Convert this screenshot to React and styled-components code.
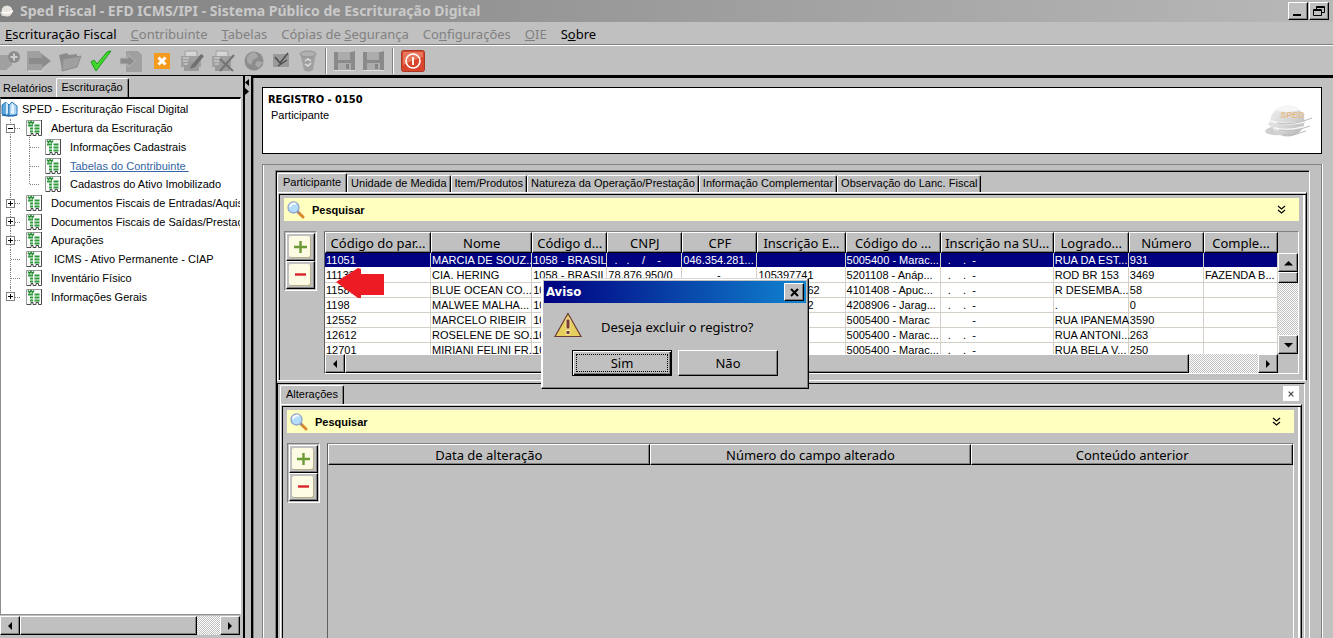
import React from "react";
import styled, { createGlobalStyle, css } from "styled-components";

const Global = createGlobalStyle`
  * { box-sizing: border-box; }
  body { margin: 0; background: #c0c0c0; }
  button { font: inherit; color: inherit; padding: 0; border: 0; background: none; }
  svg { display: block; }
`;

const small = css`
  font-family: "Liberation Sans", Arial, sans-serif;
  font-size: 11px;
`;
const large = css`
  font-family: "Noto Sans", Tahoma, sans-serif;
  font-size: 13px;
`;
const heading = css`
  font-family: "DejaVu Sans Condensed", "DejaVu Sans", Tahoma, sans-serif;
  font-weight: bold;
`;
const raised = css`
  background: #c0c0c0;
  border: 1px solid;
  border-color: #fff #000 #000 #fff;
  box-shadow: inset -1px -1px #808080;
`;
const dither = css`
  background: repeating-conic-gradient(#c0c0c0 0 25%, #fff 0 50%) 0 0 / 2px 2px;
`;

const Page = styled.div`
  ${small}
  height: 100vh;
  min-height: 520px;
  display: flex;
  flex-direction: column;
  overflow: hidden;
  color: #000;
  background: #c0c0c0;
`;

const TitleBar = styled.header`
  ${large}
  height: 22px;
  flex: none;
  display: flex;
  align-items: center;
  gap: 6px;
  padding-right: 4px;
  color: #c9c9c9;
  background: linear-gradient(90deg, #808080, #b8b8b8);
  h1 { flex: 1; margin: 0; font-size: 14px; line-height: 20px; font-weight: bold; white-space: nowrap; }
`;
const WindowButton = styled.button`
  ${raised}
  width: 20px;
  height: 18px;
  display: grid;
  place-items: center;
`;
const WindowButtons = styled.div`
  display: flex;
  gap: 1px;
`;

const MenuBar = styled.nav`
  ${large}
  height: 24px;
  flex: none;
  display: flex;
  align-items: center;
  gap: 14px;
  padding-left: 5px;
  border-bottom: 1px solid #fff;
  box-shadow: inset 0 -1px #808080;
`;
const MenuItem = styled.button`
  line-height: 20px;
  white-space: nowrap;
  color: ${(p) => (p.disabled ? "#808080" : "#000")};
`;

const ToolBar = styled.div`
  height: 29px;
  flex: none;
  display: flex;
  align-items: center;
  gap: 7px;
`;
const ToolButton = styled.button`
  width: ${(p) => p.$w}px;
  height: 24px;
  flex: none;
  display: grid;
  place-items: center;
`;
const ToolSeparator = styled.span`
  width: 2px;
  height: 26px;
  border-left: 1px solid #808080;
  border-right: 1px solid #fff;
`;

const Workspace = styled.div`
  flex: 1;
  min-height: 0;
  display: flex;
  border-top: 1px solid #000;
`;
const Sidebar = styled.aside`
  width: 245px;
  flex: none;
  display: flex;
  flex-direction: column;
  padding-top: 2px;
  border-right: 2px solid #000;
`;
const Splitter = styled.div`
  width: 5px;
  flex: none;
  padding-top: 3px;
`;
const Main = styled.main`
  flex: 1;
  min-width: 0;
  display: flex;
  flex-direction: column;
  gap: 10px;
  padding: 9px 11px 0 9px;
  border-top: 2px solid #000;
  border-left: 2px solid #000;
  box-shadow: inset 1px 0 #808080;
  margin-left: 1px;
`;

const TabList = styled.div`
  display: flex;
  align-items: flex-end;
  height: 19px;
  flex: none;
`;
const Tab = styled.button`
  height: ${(p) => (p.$active ? 19 : 17)}px;
  padding: 0 ${(p) => (p.$active ? 5 : 3)}px 3px;
  line-height: 14px;
  white-space: nowrap;
  border: 1px solid;
  border-color: #fff #000 #c0c0c0 #fff;
  border-bottom: 0;
  border-radius: 2px 2px 0 0;
  box-shadow: ${(p) => (p.$flat ? "none" : "inset -1px 0 #808080")};
  ${(p) => p.$flat && "border-color: transparent; padding: 0 2px 3px;"}
`;

const TreeBox = styled.div`
  flex: 1;
  min-height: 0;
  margin-right: 2px;
  overflow: hidden;
  background: #fff;
  border: 1px solid #909090;
  border-top: 2px solid #000;
  border-right-color: #fff;
`;
const Tree = styled.ul`
  display: grid;
  grid-auto-rows: 1fr;
  height: 206px;
  margin: 1px 0 0;
  padding: 0;
  list-style: none;
`;
const TreeRow = styled.li`
  display: flex;
  align-items: center;
  white-space: pre;
`;
const Guide = styled.span`
  position: relative;
  align-self: stretch;
  width: ${(p) => p.$w}px;
  flex: none;
  &::before {
    content: "";
    position: absolute;
    left: 9px;
    top: 0;
    bottom: ${(p) => (p.$last ? "50%" : 0)};
    border-left: 1px dotted #808080;
  }
  &::after {
    content: "";
    position: absolute;
    display: ${(p) => (p.$branch ? "block" : "none")};
    left: 10px;
    right: 6px;
    top: 50%;
    border-top: 1px dotted #808080;
  }
`;
const Expander = styled.button`
  position: absolute;
  z-index: 1;
  left: 5px;
  top: 5px;
  width: 9px;
  height: 9px;
  background: #fff;
  border: 1px solid #808080;
`;
const TreeLabel = styled.span`
  padding-left: ${(p) => (p.$root ? 4 : 8)}px;
  line-height: 16px;
`;
const TreeLink = styled.a`
  margin-left: 8px;
  line-height: 16px;
  color: #3465a4;
  text-decoration: underline;
`;

const HScroll = styled.div`
  height: 19px;
  flex: none;
  display: flex;
  margin: ${(p) => (p.$outer ? "1px 3px 3px 0" : 0)};
  ${dither}
`;
const Arrow = styled.button`
  ${raised}
  width: 20px;
  height: 19px;
  flex: none;
  display: grid;
  place-items: center;
`;
const Thumb = styled.span`
  ${raised}
  flex: ${(p) => p.$grow} 1 0;
`;
const Track = styled.span`
  flex: ${(p) => p.$grow} 1 0;
`;

const Card = styled.section`
  height: 67px;
  flex: none;
  display: flex;
  align-items: center;
  justify-content: space-between;
  padding: 0 8px 0 5px;
  background: #fff;
  border: 1px solid #000;
`;
const CardText = styled.div`
  align-self: flex-start;
  padding-top: 4px;
  h2 {
    ${heading}
    margin: 0;
    font-size: 11px;
    line-height: 15px;
  }
  p { margin: 0; padding-left: 3px; line-height: 16px; }
`;

const Outer = styled.div`
  flex: 1;
  min-height: 0;
  display: flex;
  padding: 5px 11px 0 12px;
  border: 1px solid #808080;
  border-bottom: 0;
  box-shadow: inset 1px 0 #fff, 1px 0 #fff;
`;
const Frame = styled.div`
  flex: 1;
  min-width: 0;
  display: flex;
  flex-direction: column;
  padding: 2px 2px 0 1px;
  border: 1px solid #808080;
  border-right-color: #fff;
  border-bottom: 0;
  box-shadow: inset 1px 1px #000;
`;
const Pane = styled.section`
  display: flex;
  flex-direction: column;
  gap: 10px;
  padding: 5px 7px 6px 6px;
  border: 1px solid #fff;
  border-right-color: #000;
  box-shadow: inset 1px 1px #c0c0c0, inset 2px 2px #000, inset -1px 0 #808080, inset -3px 0 #fff;
  ${(p) => p.$fill && "flex: 1; min-height: 0; border-bottom: 0; padding-bottom: 0;"}
`;
const Lower = styled.div`
  flex: 1;
  min-height: 0;
  display: flex;
  flex-direction: column;
  margin-top: 2px;
  margin-right: 2px;
  padding: 1px 2px 0 2px;
  border-top: 1px solid #000;
  border-left: 1px solid #000;
  border-right: 1px solid #fff;
`;
const LowerHead = styled.div`
  display: flex;
  justify-content: space-between;
  padding-right: 3px;
`;
const CloseTab = styled.button`
  width: 16px;
  height: 15px;
  flex: none;
  margin-top: 1px;
  display: grid;
  place-items: center;
  background: #fff;
`;

const SearchBar = styled.div`
  height: 23px;
  flex: none;
  display: flex;
  align-items: center;
  gap: 7px;
  padding: 0 13px 0 3px;
  background: #ffffc0;
  font-weight: bold;
  strong { flex: 1; line-height: 20px; }
`;
const PaneBody = styled.div`
  position: relative;
  flex: 1;
  min-height: 0;
  display: flex;
  align-items: flex-start;
  gap: 7px;
`;
const Actions = styled.div`
  width: 33px;
  flex: none;
  padding: 1px;
  border: 1px solid;
  border-color: #808080 #fff #fff #808080;
`;
const ActionButton = styled.button`
  width: 29px;
  height: 28px;
  display: grid;
  place-items: center;
  border: 1px solid;
  border-color: #fff #000 #000 #fff;
  box-shadow: inset -1px -1px #808080;
`;

const GridBox = styled.div`
  flex: 1;
  min-width: 0;
  display: flex;
  border: 1px solid;
  border-color: #808080 #fff #fff #606060;
  ${(p) => (p.$fill ? "align-self: stretch; border-bottom: 0;" : "height: 143px;")}
`;
const GridMain = styled.div`
  flex: 1;
  min-width: 0;
  display: flex;
  flex-direction: column;
`;
const Clip = styled.div`
  flex: 1;
  min-height: 0;
  overflow: hidden;
`;
const VScroll = styled.div`
  width: 20px;
  flex: none;
  display: flex;
  flex-direction: column;
  padding: 21px 0 19px;
`;
const VTrack = styled.div`
  flex: 1;
  display: flex;
  flex-direction: column;
  ${dither}
`;
const Table = styled.table`
  width: 100%;
  table-layout: fixed;
  border-collapse: separate;
  border-spacing: 0;
  th {
    ${large}
    ${raised}
    height: 21px;
    padding: 0;
    line-height: 18px;
    font-weight: normal;
    text-align: center;
    white-space: nowrap;
  }
  td {
    height: 15px;
    padding: 0 0 0 1px;
    line-height: 14px;
    white-space: pre;
    background: #fff;
    border-right: 1px solid #d4d0c8;
    border-bottom: 1px solid #d4d0c8;
  }
`;
const Row = styled.tr`
  ${(p) => p.$selected && css`
    && td { background: #000080; color: #fff; border-bottom-color: #fff; }
  `}
`;
const Pointer = styled.svg`
  position: absolute;
  left: 52px;
  top: 37px;
`;

const Dialog = styled.div`
  ${large}
  position: absolute;
  left: 541px;
  top: 278px;
  width: 268px;
  height: 111px;
  padding: 2px;
  background: #c0c0c0;
  border: 1px solid;
  border-color: #d8d8d8 #000 #000 #fff;
  box-shadow: inset -1px -1px #808080, inset 1px 1px #fff;
`;
const DialogTitle = styled.div`
  height: 22px;
  display: flex;
  align-items: center;
  justify-content: space-between;
  padding: 0 2px;
  color: #fff;
  background: linear-gradient(90deg, #000080, #1084d0);
  h2 { ${heading} margin: 0; font-size: 13px; line-height: 20px; }
  button { color: #000; }
`;
const DialogMessage = styled.div`
  display: flex;
  align-items: center;
  gap: 19px;
  padding: 9px 0 0 10px;
  p { margin: 0; padding-top: 4px; line-height: 20px; white-space: nowrap; }
`;
const DialogButtons = styled.div`
  display: flex;
  gap: 6px;
  padding: 12px 0 0 28px;
`;
const PushButton = styled.button`
  ${raised}
  position: relative;
  width: 100px;
  height: 26px;
  line-height: 20px;
  ${(p) => p.$default && css`
    border: 1px solid #000;
    box-shadow: inset 1px 1px #fff, inset -1px -1px #000, inset -2px -2px #808080;
    &::after {
      content: "";
      position: absolute;
      inset: 3px;
      border: 1px dotted #000;
    }
  `}
`;

const Tri = ({ dir }) => {
  const d = { left: "M6 0v8L2 4z", right: "M2 0v8l4-4z", up: "M4 2L8 6.5H0z", down: "M4 6.5L8 2H0z" }[dir];
  const wide = dir === "up" || dir === "down";
  return <svg width={wide ? 9 : 8} height="8" viewBox="0 0 8 8" preserveAspectRatio="none"><path d={d} /></svg>;
};

const Book = () => (
  <svg width="17" height="16" viewBox="0 0 17 16">
    <path d="M1 4l4-3 3 3v11l-3-1-4-1z" fill="#5fa8dc" stroke="#2f79b8" />
    <path d="M5 1l2 2v9l-2 2z" fill="#d6ecfa" />
    <path d="M8 4l3-3 5 4v9l-4 1-4-1z" fill="#a9d4f2" stroke="#2f79b8" />
    <path d="M11 2l2 3v8l-3-1z" fill="#eaf6fd" />
    <path d="M1 14l7 1 8-1" fill="none" stroke="#2670b0" strokeWidth="1.600" />
  </svg>
);
const Sheet = () => (
  <svg width="17" height="16" viewBox="0 0 17 16">
    <path d="M.5 .5h15v15l-3-2.500-2.500 2.500-2-2.500-2 2.500-2-2.500-3.500 2.500z" fill="#fafcfa" />
    <path d="M.5 15V.5h15" fill="none" stroke="#9a9a9a" />
    <path d="M15.500 0v15.500h-3v-2h-2.500v2h-3v-2H5v2H.5" fill="none" stroke="#4a4a4a" />
    <path d="M2 1.500l1.500 2L5 1.500l1.500 2L8 1.500" fill="none" stroke="#2a8c35" strokeWidth="1.400" />
    <path d="M2 5.500h5M8.500 5.500h5M4 8.500h3M8.500 8.500h5M4 11.500h3M8.500 11.500h5" stroke="#2f9a3c" strokeWidth="2" />
  </svg>
);
const Lens = () => (
  <svg width="18" height="18" viewBox="0 0 18 18">
    <path d="M11 11l5 5" stroke="#d98b2b" strokeWidth="3" strokeLinecap="round" />
    <path d="M10 10l2 2" stroke="#8c8c9c" strokeWidth="2" />
    <circle cx="6.500" cy="6.500" r="5.500" fill="#b4dcfb" stroke="#8ea4cc" strokeWidth="1.300" />
    <path d="M3 6a4 4 0 0 1 6-3" fill="none" stroke="#fff" strokeWidth="1.800" />
  </svg>
);
const Chevrons = () => (
  <svg width="9" height="9" viewBox="0 0 9 9" fill="none" stroke="#000" strokeWidth="1.200">
    <path d="M1 1l3.500 3L8 1M1 5l3.500 3L8 5" />
  </svg>
);
const PlusMinus = ({ minus }) => (
  <svg width="23" height="23" viewBox="0 0 23 23">
    <rect x="1" y="1" width="21" height="21" rx="2" fill="#b9b08a" />
    <rect width="21" height="21" rx="2" fill="#fdfbe4" />
    <path d={minus ? "M6 10.500h11" : "M5 11h13M11.500 5v12"} stroke={minus ? "#d8232a" : "#6c9a35"} strokeWidth="2.400" />
  </svg>
);
const Cross = ({ size = 9, color = "#000", w = 2 }) => (
  <svg width={size} height={size} viewBox="0 0 9 9"><path d="M1 1l7 7M8 1L1 8" stroke={color} strokeWidth={w} /></svg>
);
const Ball = () => (
  <svg width="48" height="34" viewBox="0 0 48 34">
    <defs>
      <linearGradient id="ball" x1="0" y1="0" x2="1" y2="1">
        <stop offset="0" stopColor="#f0f0f0" /><stop offset=".5" stopColor="#d8d8d8" /><stop offset="1" stopColor="#b4b4b4" />
      </linearGradient>
    </defs>
    <path d="M0 27q3-5 14-5l8 3-6 6q-14 1-16-4z" fill="#cfcfcf" />
    <path d="M3 20q5-7 14-5v8q-8 3-14-3z" fill="#dedede" />
    <ellipse cx="22.500" cy="17" rx="17" ry="15.500" fill="url(#ball)" />
    <path d="M10 6q12-9 25 0-12 4-25 0z" fill="#f6f6f6" />
    <path d="M6 17q14 5 33 1M9 24q13 4 29-1" fill="none" stroke="#f4f4f4" strokeWidth="2" />
    <path d="M12 19q16 3 35-5M14 26q16 2 31-4M18 31q12 1 23-4" fill="none" stroke="#bcbcbc" />
    <text x="15" y="14" fontFamily="Liberation Sans, sans-serif" fontWeight="bold" fontStyle="italic" fontSize="9" fill="#e6bd8a">SPED</text>
  </svg>
);
const MiniBall = () => (
  <svg width="14" height="14" viewBox="0 0 14 14">
    <path d="M0 8h8v4H2z" fill="#d8d8d8" />
    <circle cx="7" cy="7" r="5.500" fill="#e8e3dc" />
    <path d="M2 8q5 2 11-1" fill="none" stroke="#fff" strokeWidth="1.500" />
  </svg>
);
const Warning = () => (
  <svg width="28" height="26" viewBox="0 0 28 26">
    <path d="M14 1.500L27 24.500H1z" fill="#e6cf5c" stroke="#6b3a3a" strokeWidth="1.200" />
    <path d="M12 7h4v10h-4zM12 18.500h4v4h-4z" fill="#7a3b36" stroke="#f6e9a4" />
  </svg>
);

const g = "#a0a0a0";
const dk = "#8c8c8c";
const ICONS = {
  add: [20, <><path d="M0 6h12v10l-6 5H0z" fill={g} /><circle cx="14" cy="8" r="6" fill={dk} /><path d="M14 4.500v7M10.500 8h7" stroke="#ccc" strokeWidth="2" /></>],
  export: [24, <><path d="M0 2h12l3 3v17H0z" fill={g} /><path d="M2 9h13V5l9 7-9 7v-4H2z" fill={dk} /><path d="M1 22h15" stroke="#e0e0e0" /></>],
  open: [24, <><path d="M1 6l8-2 2 2 8-1v4L4 20z" fill={dk} /><path d="M5 10l18-3-4 11-15 4z" fill={g} stroke="#8c8c8c" /></>],
  check: [24, <path d="M2 13l5 9L22 2l-4 1-10 12-3-4z" fill="#43d92c" stroke="#169c18" />],
  import: [24, <><path d="M6 2h12l4 4v17H6z" fill={g} /><path d="M0 9h8V6l7 6-7 6v-3H0z" fill={dk} stroke="#b5b5b5" /></>],
  close: [22, <><rect x="3" y="4" width="16" height="16" fill="#f49a1c" /><path d="M7.500 8.500l7 7M14.500 8.500l-7 7" stroke="#fff" strokeWidth="3" /></>],
  sign: [24, <><path d="M5 2h12v7H5z" fill="#d2d2d2" stroke={g} /><path d="M1 7h20v11H1z" fill={g} /><path d="M4 13h15v9H4z" fill="#999" /><path d="M11 17l10-12 3 2-9 11-5 2z" fill="#707070" /><path d="M3 9h6M3 12h5M7 4h7M4 15h4" stroke="#ddd" /></>],
  unsign: [24, <><path d="M5 2h12v7H5z" fill="#d2d2d2" stroke={g} /><path d="M1 7h19v11H1z" fill={g} /><path d="M4 14h15v8H4z" fill="#999" /><path d="M9 10l13 12M23 6L9 22" stroke="#747474" strokeWidth="2" /><path d="M3 9h6M3 12h5M7 4h7M4 15h4" stroke="#ddd" /></>],
  globe: [24, <><circle cx="12" cy="12" r="9.500" fill="#8c8c8c" /><path d="M5 8q4-6 9-4l2 4-5 3-2 5-4-3zM15 12l6 1-4 6-4-3z" fill="#a8a8a8" /></>],
  verify: [18, <><path d="M0 5h16v13H0z" fill="#9a9a9a" /><path d="M2 8l5 6 8-10M5 17l9-6" fill="none" stroke="#4c4c4c" strokeWidth="1.500" /></>],
  bin: [20, <><path d="M2 4h16l-3 17q-5 3-9 0z" fill={g} /><ellipse cx="10" cy="5" rx="8" ry="3" fill="#b0b0b0" stroke="#939393" /><path d="M7 12l3-2 3 2M13 14l-3 3-3-2" fill="none" stroke="#dedede" strokeWidth="1.500" /></>],
  save: [22, <><path d="M0 3h18l3-1v19H0z" fill="#8a8a8a" /><path d="M4 3h12v8H4zM4 14h13v7H4z" fill="#acacac" /><path d="M12 15h3v5h-3z" fill="#858585" /><path d="M0 21.500h21" stroke="#ddd" /></>],
  power: [24, <><rect x=".5" y="1.500" width="23" height="21" rx="2" fill="#d8452c" stroke="#a83a25" /><path d="M2 3h20v5q-10 3-20 8z" fill="#e8765c" /><circle cx="12" cy="12" r="7" fill="none" stroke="#fff" strokeWidth="1.600" /><path d="M12 8v8" stroke="#fff" strokeWidth="1.800" /></>],
};
const TOOLS = [
  ["add", "Novo"], ["export", "Exportar"], ["open", "Abrir"], ["check", "Verificar"], ["import", "Importar"],
  ["close", "Fechar"], ["sign", "Assinar"], ["unsign", "Remover assinatura"], ["globe", "Transmitir"],
  ["verify", "Conferir"], ["bin", "Excluir"], null, ["save", "Salvar"], ["save", "Restaurar"], null, ["power", "Sair"],
];

const MENU = [
  ["", "E", "scrituração Fiscal", true], ["", "C", "ontribuinte"], ["", "T", "abelas"], ["Cópias de ", "S", "egurança"],
  ["Co", "n", "figurações"], ["", "O", "IE"], ["S", "o", "bre", true],
];

const TREE = [
  { level: 1, text: "Abertura da Escrituração", box: "-" },
  { level: 2, text: "Informações Cadastrais" },
  { level: 2, text: "Tabelas do Contribuinte ", link: true },
  { level: 2, text: "Cadastros do Ativo Imobilizado", last: true },
  { level: 1, text: "Documentos Fiscais de Entradas/Aquis", box: "+" },
  { level: 1, text: "Documentos Fiscais de Saídas/Prestaç", box: "+" },
  { level: 1, text: "Apurações", box: "+" },
  { level: 1, text: " ICMS - Ativo Permanente - CIAP" },
  { level: 1, text: "Inventário Físico" },
  { level: 1, text: "Informações Gerais", box: "+", last: true },
];

const COLS = [
  ["Código do par...", 106], ["Nome", 101], ["Código d...", 75], ["CNPJ", 75], ["CPF", 75], ["Inscrição E...", 88],
  ["Código do ...", 95], ["Inscrição na SU...", 113], ["Logrado...", 75], ["Número", 75], ["Comple...", 74],
];
const BR = "1058 - BRASIL";
const SU = "  .    .  -";
const ROWS = [
  ["11051", "MARCIA DE SOUZ...", BR, "  .   .    /    -", "046.354.281...", "", "5005400 - Marac...", SU, "RUA DA EST...", "931", ""],
  ["11133", "CIA. HERING", BR, "78.876.950/0", "           -", "105397741", "5201108 - Anáp...", SU, "ROD BR 153", "3469", "FAZENDA B..."],
  ["11587", "BLUE OCEAN CO...", BR, "", "", "9052706262", "4101408 - Apuc...", SU, "R DESEMBA...", "58", ""],
  ["1198", "MALWEE MALHA...", BR, "", "", "250303322", "4208906 - Jarag...", SU, ".", "0", ""],
  ["12552", "MARCELO RIBEIR", BR, "", "", "", "5005400 - Marac", "          -", "RUA IPANEMA", "3590", ""],
  ["12612", "ROSELENE DE SO...", BR, "", "", "", "5005400 - Marac...", SU, "RUA ANTONI...", "263", ""],
  ["12701", "MIRIANI FELINI FR...", BR, "", "", "", "5005400 - Marac...", SU, "RUA BELA V...", "250", ""],
];

const Search = () => (
  <SearchBar><Lens /><strong>Pesquisar</strong><button aria-label="Expandir pesquisa"><Chevrons /></button></SearchBar>
);
const AddRemove = () => (
  <Actions>
    <ActionButton aria-label="Adicionar"><PlusMinus /></ActionButton>
    <ActionButton aria-label="Remover"><PlusMinus minus /></ActionButton>
  </Actions>
);

export default function App() {
  return (
    <Page>
      <Global />
      <TitleBar>
        <MiniBall />
        <h1>Sped Fiscal - EFD ICMS/IPI - Sistema Público de Escrituração Digital</h1>
        <WindowButtons>
          <WindowButton aria-label="Minimizar"><svg width="12" height="12"><path d="M1 10h8" stroke="#000" strokeWidth="2" /></svg></WindowButton>
          <WindowButton aria-label="Restaurar">
            <svg width="12" height="12" fill="#c0c0c0" stroke="#000"><path d="M3.500 1.500h8v6h-8zM3.500 2.500h8" /><path d="M.5 4.500h8v6h-8zM.5 5.500h8" /></svg>
          </WindowButton>
        </WindowButtons>
      </TitleBar>
      <MenuBar>
        {MENU.map(([a, u, b, on]) => (
          <MenuItem key={a + u + b} disabled={!on}>{a}<u>{u}</u>{b}</MenuItem>
        ))}
      </MenuBar>
      <ToolBar>
        {TOOLS.map((t, i) => t ? (
          <ToolButton key={i} $w={ICONS[t[0]][0]} aria-label={t[1]}>
            <svg width={ICONS[t[0]][0]} height="24">{ICONS[t[0]][1]}</svg>
          </ToolButton>
        ) : <ToolSeparator key={i} />)}
      </ToolBar>
      <Workspace>
        <Sidebar>
          <TabList><Tab $flat>Relatórios</Tab><Tab $active>Escrituração</Tab></TabList>
          <TreeBox>
            <Tree>
              <TreeRow><Book /><TreeLabel $root>SPED - Escrituração Fiscal Digital</TreeLabel></TreeRow>
              {TREE.map((n) => (
                <TreeRow key={n.text}>
                  <Guide $w={n.level === 1 ? 25 : 19} $branch={n.level === 1} $last={n.level === 1 && n.last}>
                    {n.box && (
                      <Expander aria-label={n.box === "+" ? "Expandir" : "Recolher"}>
                        <svg width="7" height="7"><path d={n.box === "+" ? "M1 3.500h5M3.500 1v5" : "M1 3.500h5"} stroke="#000" /></svg>
                      </Expander>
                    )}
                  </Guide>
                  {n.level === 2 && <Guide $w={25} $branch $last={n.last} />}
                  <Sheet />
                  {n.link ? <TreeLink href="#tabelas">{n.text}</TreeLink> : <TreeLabel>{n.text}</TreeLabel>}
                </TreeRow>
              ))}
            </Tree>
          </TreeBox>
          <HScroll $outer>
            <Arrow aria-label="Rolar para a esquerda"><Tri dir="left" /></Arrow>
            <Thumb $grow={177} /><Track $grow={23} />
            <Arrow aria-label="Rolar para a direita"><Tri dir="right" /></Arrow>
          </HScroll>
        </Sidebar>
        <Splitter><svg width="4" height="16"><path d="M4 0v7L0 3.500zM0 9v7l4-3.500z" /></svg></Splitter>
        <Main>
          <Card>
            <CardText><h2>REGISTRO - 0150</h2><p>Participante</p></CardText>
            <Ball />
          </Card>
          <Outer>
            <Frame>
              <TabList>
                <Tab $active>Participante</Tab>
                {["Unidade de Medida", "Item/Produtos", "Natureza da Operação/Prestação", "Informação Complementar", "Observação do Lanc. Fiscal"].map((t) => <Tab key={t}>{t}</Tab>)}
              </TabList>
              <Pane>
                <Search />
                <PaneBody>
                  <AddRemove />
                  <GridBox>
                    <GridMain>
                      <Clip>
                        <Table>
                          <colgroup>{COLS.map(([c, w]) => <col key={c} width={w} />)}</colgroup>
                          <thead><tr>{COLS.map(([c]) => <th key={c}>{c}</th>)}</tr></thead>
                          <tbody>
                            {ROWS.map((r, i) => <Row key={r[0]} $selected={i === 0}>{r.map((c, j) => <td key={j}>{c}</td>)}</Row>)}
                          </tbody>
                        </Table>
                      </Clip>
                      <HScroll>
                        <Arrow aria-label="Rolar para a esquerda"><Tri dir="left" /></Arrow>
                        <Thumb $grow={843} /><Track $grow={69} />
                        <Arrow aria-label="Rolar para a direita"><Tri dir="right" /></Arrow>
                      </HScroll>
                    </GridMain>
                    <VScroll>
                      <VTrack>
                        <Arrow aria-label="Rolar para cima"><Tri dir="up" /></Arrow>
                        <Thumb $grow={9} /><Track $grow={55} />
                        <Arrow aria-label="Rolar para baixo"><Tri dir="down" /></Arrow>
                      </VTrack>
                    </VScroll>
                  </GridBox>
                  <Pointer width="52" height="30" viewBox="0 0 52 30"><path d="M0 14L22 0l3 1v5h23v21H25v3h-3z" fill="#ed1c24" /></Pointer>
                </PaneBody>
              </Pane>
              <Lower>
                <LowerHead>
                  <TabList><Tab $active>Alterações</Tab></TabList>
                  <CloseTab aria-label="Fechar alterações"><Cross size={6} color="#444" w={1.8} /></CloseTab>
                </LowerHead>
                <Pane $fill>
                  <Search />
                  <PaneBody>
                    <AddRemove />
                    <GridBox $fill>
                      <GridMain>
                        <Table>
                          <thead><tr><th>Data de alteração</th><th>Número do campo alterado</th><th>Conteúdo anterior</th></tr></thead>
                        </Table>
                      </GridMain>
                    </GridBox>
                  </PaneBody>
                </Pane>
              </Lower>
            </Frame>
          </Outer>
        </Main>
      </Workspace>
      <Dialog role="dialog" aria-label="Aviso">
        <DialogTitle><h2>Aviso</h2><WindowButton aria-label="Fechar"><Cross /></WindowButton></DialogTitle>
        <DialogMessage><Warning /><p>Deseja excluir o registro?</p></DialogMessage>
        <DialogButtons><PushButton $default>Sim</PushButton><PushButton>Não</PushButton></DialogButtons>
      </Dialog>
    </Page>
  );
}
